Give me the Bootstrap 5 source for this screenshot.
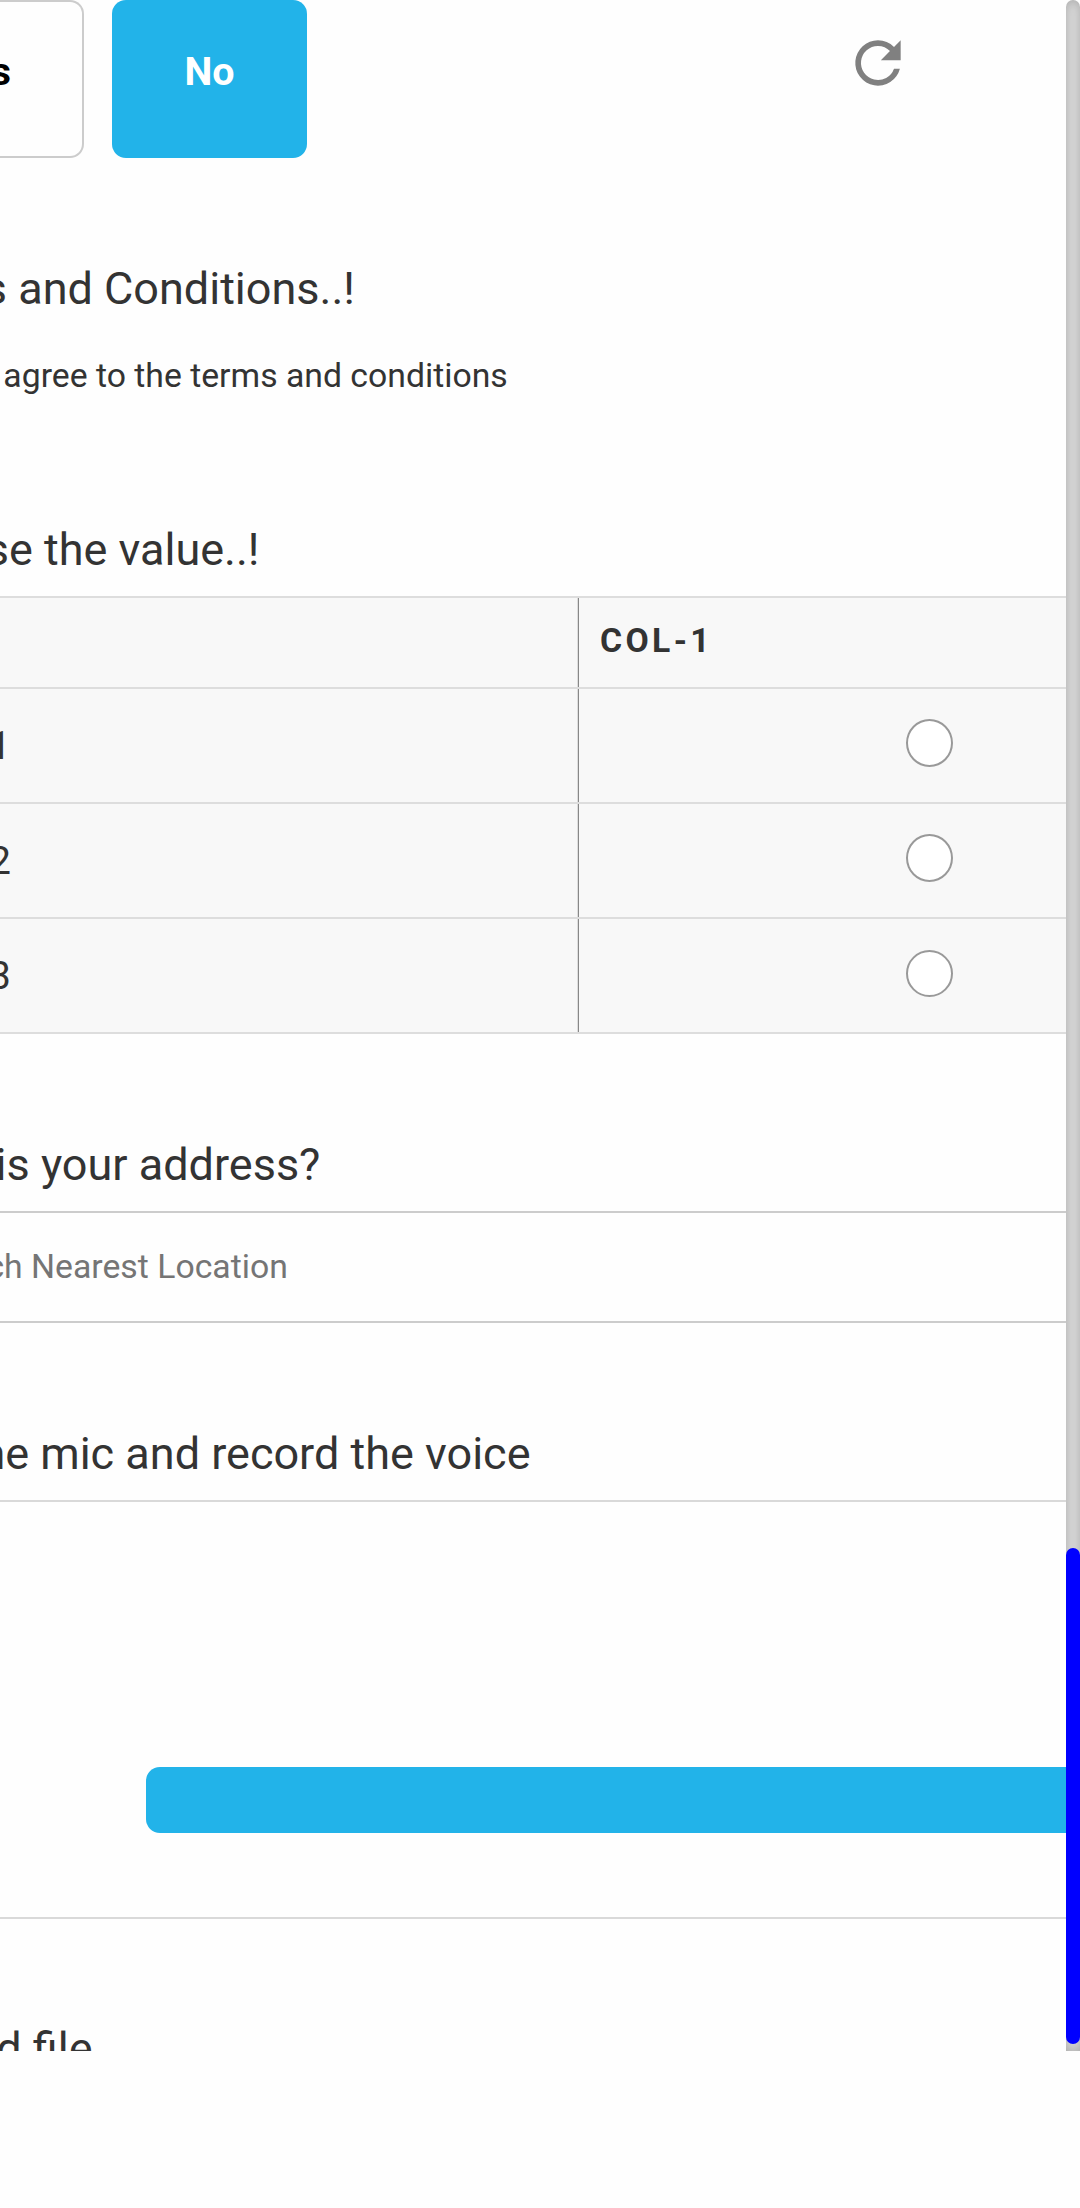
<!DOCTYPE html>
<html lang="en">
<head>
<meta charset="utf-8">
<meta name="viewport" content="width=device-width, initial-scale=1">
<title>Form</title>
<link href="https://cdn.jsdelivr.net/npm/bootstrap@5.3.0/dist/css/bootstrap.min.css" rel="stylesheet">
<style>
  body { background: #fefefe; color: #333; font-family: Roboto, "Liberation Sans", sans-serif; }
  .form-view { height: 2051px; }
  .form-pane { width: 1066px; }
  .answer-row { height: 158px; margin-bottom: 101px; }
  .choice { height: 158px; border-radius: 14px; font-size: 39.4px; font-weight: 700; line-height: 58px; padding: 43px 0 0; border: 0; }
  .choice-yes { width: 84px; border: 2px solid #ccc; border-left: 0; border-radius: 0 14px 14px 0; color: #000; padding: 41px 71px 0 0; }
  .choice-no { width: 195px; margin-left: 28px; background: #22b3e9; color: #fff; }
  .reload { width: 68px; height: 68px; margin: 29.4px 0 0 537px; fill: #808080; }
  .question { font-size: 45px; line-height: 60px; margin-bottom: 16px; font-weight: 400; }
  .q-terms { width: 354.9px; margin-bottom: 35px; }
  .q-value { width: 259.4px; }
  .q-address { width: 320.4px; margin-top: 101px; }
  .q-mic { width: 530.5px; margin-top: 101px; }
  .q-file { width: 92.5px; margin-top: 100px; }
  .agree { width: 507.7px; font-size: 33.75px; line-height: 44px; margin-bottom: 122px; }
  .matrix { table-layout: fixed; border-collapse: separate; border-spacing: 0; background: #f8f8f8; border-top: 2px solid #ddd; }
  .matrix th, .matrix td { border-bottom: 2px solid #ddd; padding: 0; vertical-align: top; }
  .matrix tr > :first-child { width: 577px; }
  .matrix tr > :last-child { box-shadow: inset 1px 0 #ddd, inset 2px 0 #888; }
  .matrix thead th { height: 91px; font-size: 33.75px; line-height: 44px; letter-spacing: 3.35px; padding: 21px 0 0 23px; }
  .matrix tbody td { height: 115px; }
  .row-name { width: 11px; font-size: 39px; line-height: 60px; margin-top: 27px; }
  .round { width: 47px; height: 48px; margin: 30px 0 0 329px; border: 2px solid #999; background-color: #fff; float: none; display: block; }
  .matrix tr:last-child .round { height: 47px; margin-top: 31px; }
  .place-box { height: 112px; border: solid #ccc; border-width: 2px 0; color: #757575; font-size: 33.75px; line-height: 44px; padding-top: 32px; }
  .place-hint { width: 287.8px; }
  .mic-box { height: 419px; border: solid #d9d9d9; border-width: 2px 0; padding: 265px 0 0 146px; }
  .mic-bar { height: 66px; background: #22b3e9; border-radius: 14px 0 0 14px; }
  .track { width: 14px; height: 2051px; border-radius: 7px 7px 0 0; background: #dedede; box-shadow: inset 0 0 12px rgba(0,0,0,.25); padding-top: 1548px; }
  .thumb { height: 496px; border-radius: 7px; background: #00f; }
</style>
</head>
<body>
<div class="form-view d-flex overflow-hidden">
  <main class="form-pane flex-shrink-0 overflow-hidden">
    <div class="answer-row d-flex align-items-start">
      <div class="choice choice-yes d-flex justify-content-end flex-shrink-0 overflow-hidden">s</div>
      <div class="choice choice-no text-center">No</div>
      <svg class="reload" viewBox="0 0 24 24" aria-hidden="true"><path d="M17.65 6.35A7.96 7.96 0 0 0 12 4a8 8 0 1 0 7.73 10h-2.08A6 6 0 1 1 12 6c1.66 0 3.14.69 4.22 1.78L13 11h7V4z"/></svg>
    </div>
    <h2 class="question q-terms d-flex justify-content-end text-nowrap">s and Conditions..!</h2>
    <div class="agree d-flex justify-content-end text-nowrap">agree to the terms and conditions</div>

    <h2 class="question q-value d-flex justify-content-end text-nowrap">se the value..!</h2>
    <table class="matrix w-100">
      <thead><tr><th></th><th>COL-1</th></tr></thead>
      <tbody>
        <tr><td><div class="row-name d-flex justify-content-end">1</div></td><td><input class="form-check-input round" type="radio" name="r1"></td></tr>
        <tr><td><div class="row-name d-flex justify-content-end">2</div></td><td><input class="form-check-input round" type="radio" name="r2"></td></tr>
        <tr><td><div class="row-name d-flex justify-content-end">3</div></td><td><input class="form-check-input round" type="radio" name="r3"></td></tr>
      </tbody>
    </table>

    <h2 class="question q-address d-flex justify-content-end text-nowrap">is your address?</h2>
    <div class="place-box"><div class="place-hint d-flex justify-content-end text-nowrap">ch Nearest Location</div></div>

    <h2 class="question q-mic d-flex justify-content-end text-nowrap">he mic and record the voice</h2>
    <div class="mic-box"><div class="mic-bar"></div></div>

    <h2 class="question q-file d-flex justify-content-end text-nowrap">d file</h2>
  </main>
  <div class="track flex-shrink-0"><div class="thumb"></div></div>
</div>
<script src="https://cdn.jsdelivr.net/npm/bootstrap@5.3.0/dist/js/bootstrap.bundle.min.js"></script>
</body>
</html>
